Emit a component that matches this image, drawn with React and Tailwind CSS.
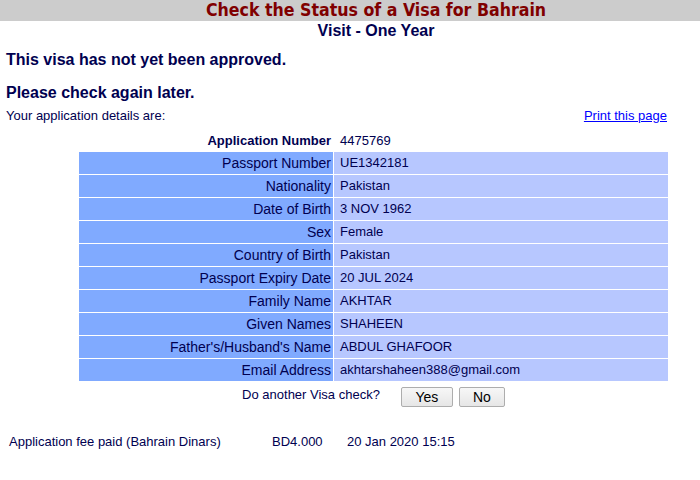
export default function App() {
  const rows = [
    ["Passport Number", "UE1342181"],
    ["Nationality", "Pakistan"],
    ["Date of Birth", "3 NOV 1962"],
    ["Sex", "Female"],
    ["Country of Birth", "Pakistan"],
    ["Passport Expiry Date", "20 JUL 2024"],
    ["Family Name", "AKHTAR"],
    ["Given Names", "SHAHEEN"],
    ["Father's/Husband's Name", "ABDUL GHAFOOR"],
    ["Email Address", "akhtarshaheen388@gmail.com"],
  ];
  return (
    <div
      className="w-[700px] h-[480px] bg-white text-[#000050] overflow-hidden"
      style={{ fontFamily: '"Liberation Sans", Arial, sans-serif' }}
    >
      <div className="h-[21px] bg-[#cccccc] pl-[52px] flex items-center justify-center">
        <span
          className="text-[17.6px] font-bold text-[#800000] leading-[21px]"
          style={{ fontFamily: '"DejaVu Sans Condensed", "DejaVu Sans", sans-serif', fontStretch: "condensed" }}
        >
          Check the Status of a Visa for Bahrain
        </span>
      </div>
      <div className="h-[19px] pl-[52px] text-center text-[16px] font-bold leading-[19px]">
        Visit - One Year
      </div>
      <div className="px-[6px]">
        <div className="mt-[11px] h-[18px] text-[16px] font-bold leading-[18px]">
          This visa has not yet been approved.
        </div>
        <div className="mt-[15px] h-[18px] text-[16px] font-bold leading-[18px]">
          Please check again later.
        </div>
        <div className="mt-[6px] h-[15px] flex justify-between text-[13px] leading-[15px] w-[661px]">
          <span>Your application details are:</span>
          <a href="#" className="text-[#0000ff] underline">Print this page</a>
        </div>
      </div>
      <div className="ml-[79px] w-[589px] mt-[6px] text-[13px]">
        <div className="flex h-[22px] items-center leading-[15px]">
          <div className="w-[254px] pr-[2px] text-right font-bold">Application Number</div>
          <div className="ml-[1px] pl-[6px]">4475769</div>
        </div>
        {rows.map(([k, v]) => (
          <div key={k} className="flex h-[22px] mt-[1px] leading-[22px]">
            <div className="w-[254px] bg-[#80aaff] pr-[2px] text-right text-[14px]">{k}</div>
            <div className="ml-[1px] flex-1 bg-[#b7c7ff] pl-[6px]">{v}</div>
          </div>
        ))}
        <div className="mt-[6px] flex items-start justify-center">
          <span className="leading-[15px] mr-[21px]">Do another Visa check?</span>
          <button className="w-[52px] h-[20px] border border-[#adadad] rounded-[2px] bg-gradient-to-b from-[#f7f7f7] to-[#e6e6e6] text-[14px] text-black leading-[18px]">
            Yes
          </button>
          <button className="ml-[6px] w-[46px] h-[20px] border border-[#adadad] rounded-[2px] bg-gradient-to-b from-[#f7f7f7] to-[#e6e6e6] text-[14px] text-black leading-[18px]">
            No
          </button>
        </div>
      </div>
      <div className="mt-[27px] pl-[9px] flex text-[13px] leading-[15px]">
        <span className="w-[263px]">Application fee paid (Bahrain Dinars)</span>
        <span className="w-[75px]">BD4.000</span>
        <span>20 Jan 2020 15:15</span>
      </div>
    </div>
  );
}
